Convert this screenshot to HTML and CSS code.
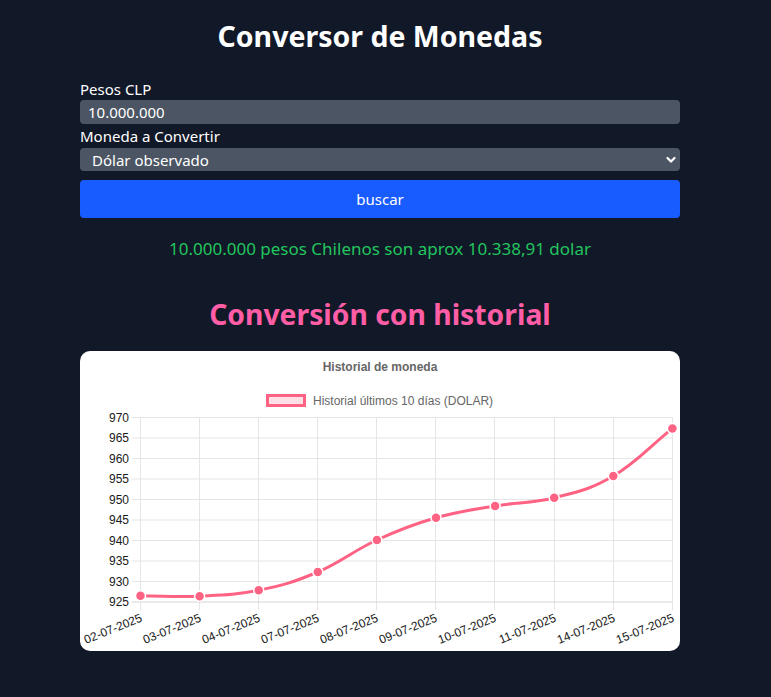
FILE: index.html
```html
<!DOCTYPE html>
<html lang="es">
<head>
<meta charset="utf-8">
<title>Conversor de Monedas</title>
<link rel="stylesheet" href="styles.css">
</head>
<body>
<main class="page">
  <h1 class="title">Conversor de Monedas</h1>
  <label class="label label-first" for="pesos">Pesos CLP</label>
  <input class="field" id="pesos" type="text" value="10.000.000">
  <label class="label" for="moneda">Moneda a Convertir</label>
  <div class="select-wrap">
    <select class="field select" id="moneda">
      <option>Dólar observado</option>
    </select>
    <svg class="chevron" width="10" height="8" viewBox="0 0 10 8"><path d="M1.5 2 L5 5.5 L8.5 2" fill="none" stroke="#fff" stroke-width="2.2" stroke-linecap="round" stroke-linejoin="round"/></svg>
  </div>
  <button class="btn" type="button">buscar</button>
  <p class="result">10.000.000 pesos Chilenos son aprox 10.338,91 dolar</p>
  <h2 class="subtitle">Conversión con historial</h2>
  <section class="card">
    <svg class="chart" width="600" height="300" viewBox="0 0 600 300">
      <text class="c-title" x="300" y="20" text-anchor="middle">Historial de moneda</text>
      <rect x="187.5" y="44.5" width="37" height="10" fill="#ffe0e6" stroke="#ff6384" stroke-width="3"/>
      <text class="c-legend" x="233" y="54">Historial últimos 10 días (DOLAR)</text>
      <g class="grid" stroke="#e5e5e5" stroke-width="1">
        <line x1="51.7" y1="66.5" x2="592.4" y2="66.5"/>
        <line x1="51.7" y1="87" x2="592.4" y2="87"/>
        <line x1="51.7" y1="107.5" x2="592.4" y2="107.5"/>
        <line x1="51.7" y1="128" x2="592.4" y2="128"/>
        <line x1="51.7" y1="148.5" x2="592.4" y2="148.5"/>
        <line x1="51.7" y1="169" x2="592.4" y2="169"/>
        <line x1="51.7" y1="189.5" x2="592.4" y2="189.5"/>
        <line x1="51.7" y1="210" x2="592.4" y2="210"/>
        <line x1="51.7" y1="230.5" x2="592.4" y2="230.5"/>
        <line x1="60.5" y1="66.5" x2="60.5" y2="259"/>
        <line x1="119.5" y1="66.5" x2="119.5" y2="259"/>
        <line x1="178.5" y1="66.5" x2="178.5" y2="259"/>
        <line x1="237.5" y1="66.5" x2="237.5" y2="259"/>
        <line x1="296.5" y1="66.5" x2="296.5" y2="259"/>
        <line x1="355.5" y1="66.5" x2="355.5" y2="259"/>
        <line x1="414.5" y1="66.5" x2="414.5" y2="259"/>
        <line x1="474.5" y1="66.5" x2="474.5" y2="259"/>
        <line x1="533.5" y1="66.5" x2="533.5" y2="259"/>
        <line x1="592.5" y1="66.5" x2="592.5" y2="259"/>
      </g>
      <line x1="51.7" y1="251" x2="592.4" y2="251" stroke="#d4d4d4" stroke-width="1"/>
      <g class="c-tick" text-anchor="end">
        <text x="49" y="70.5">970</text>
        <text x="49" y="91">965</text>
        <text x="49" y="111.5">960</text>
        <text x="49" y="132">955</text>
        <text x="49" y="152.5">950</text>
        <text x="49" y="173">945</text>
        <text x="49" y="193.5">940</text>
        <text x="49" y="214">935</text>
        <text x="49" y="234.5">930</text>
        <text x="49" y="255">925</text>
      </g>
      <g class="c-tick" text-anchor="end">
        <text transform="translate(63 270) rotate(-22)">02-07-2025</text>
        <text transform="translate(122 270) rotate(-22)">03-07-2025</text>
        <text transform="translate(181 270) rotate(-22)">04-07-2025</text>
        <text transform="translate(240 270) rotate(-22)">07-07-2025</text>
        <text transform="translate(299 270) rotate(-22)">08-07-2025</text>
        <text transform="translate(358 270) rotate(-22)">09-07-2025</text>
        <text transform="translate(417 270) rotate(-22)">10-07-2025</text>
        <text transform="translate(477 270) rotate(-22)">11-07-2025</text>
        <text transform="translate(536 270) rotate(-22)">14-07-2025</text>
        <text transform="translate(595 270) rotate(-22)">15-07-2025</text>
      </g>
      <path d="M60.5,244.8 C84.14,244.96 95.96,246.3 119.6,245.2 C143.24,244.1 155.06,244.14 178.7,239.3 C202.34,234.46 214.16,231.06 237.8,221.0 C261.44,210.94 273.26,199.84 296.9,189.0 C320.54,178.16 332.36,173.62 356.0,166.8 C379.64,159.98 391.46,158.92 415.1,154.9 C438.74,150.88 450.56,152.68 474.2,146.7 C497.84,140.72 509.66,138.86 533.3,125.0 C556.94,111.14 568.76,96.44 592.4,77.4" fill="none" stroke="#ff6384" stroke-width="3"/>
      <g fill="#ff6384" stroke="#fff" stroke-width="1.5">
        <circle cx="60.5" cy="244.8" r="5"/>
        <circle cx="119.6" cy="245.2" r="5"/>
        <circle cx="178.7" cy="239.3" r="5"/>
        <circle cx="237.8" cy="221.0" r="5"/>
        <circle cx="296.9" cy="189.0" r="5"/>
        <circle cx="356.0" cy="166.8" r="5"/>
        <circle cx="415.1" cy="154.9" r="5"/>
        <circle cx="474.2" cy="146.7" r="5"/>
        <circle cx="533.3" cy="125.0" r="5"/>
        <circle cx="592.4" cy="77.4" r="5"/>
      </g>
    </svg>
  </section>
</main>
</body>
</html>
```
FILE: styles.css
```css
* { box-sizing: border-box; }
html, body { margin: 0; padding: 0; }
body {
  background: #111827;
  color: #ffffff;
  font-family: "Noto Sans", "Open Sans", sans-serif;
  height: 697px;
  overflow: hidden;
}
.page {
  width: 600px;
  margin-left: 80px;
  padding-top: 16px;
  display: flex;
  flex-direction: column;
}
.title {
  margin: 0;
  font-size: 28.5px;
  line-height: 40px;
  font-weight: 700;
  text-align: center;
}
.label {
  display: block;
  font-size: 15px;
  line-height: 20px;
  margin-top: 2px;
}
.label-first { margin-top: 23px; }
.field {
  display: block;
  width: 100%;
  height: 24px;
  margin-top: 1px;
  border: none;
  border-radius: 4px;
  background: #4b5563;
  color: #ffffff;
  font-family: inherit;
  font-size: 15px;
  padding: 0 8px;
  outline: none;
}
.select-wrap {
  position: relative;
  margin-top: 2px;
}
.select {
  margin-top: 0;
  height: 23px;
  padding-left: 12px;
  appearance: none;
  -webkit-appearance: none;
}
.chevron {
  position: absolute;
  right: 4px;
  top: 8px;
}
.btn {
  margin-top: 9px;
  height: 38px;
  width: 100%;
  border: none;
  border-radius: 4px;
  background: #185cff;
  color: #ffffff;
  font-family: inherit;
  font-size: 15px;
}
.result {
  margin: 19px 0 0;
  line-height: 24px;
  font-size: 17px;
  color: #22c55e;
  text-align: center;
}
.subtitle {
  margin: 33px 0 0;
  font-size: 28.3px;
  line-height: 40px;
  font-weight: 700;
  color: #ff5ea6;
  text-align: center;
}
.card {
  margin-top: 17px;
  height: 300px;
  background: #ffffff;
  border-radius: 10px;
  overflow: hidden;
}
.chart { display: block; }
.c-title {
  font-family: "Liberation Sans", Arial, sans-serif;
  font-size: 12px;
  font-weight: 700;
  fill: #666666;
}
.c-legend {
  font-family: "Liberation Sans", Arial, sans-serif;
  font-size: 12px;
  fill: #666666;
}
.c-tick {
  font-family: "Liberation Sans", Arial, sans-serif;
  font-size: 12px;
  fill: #1a1a1a;
}
```
